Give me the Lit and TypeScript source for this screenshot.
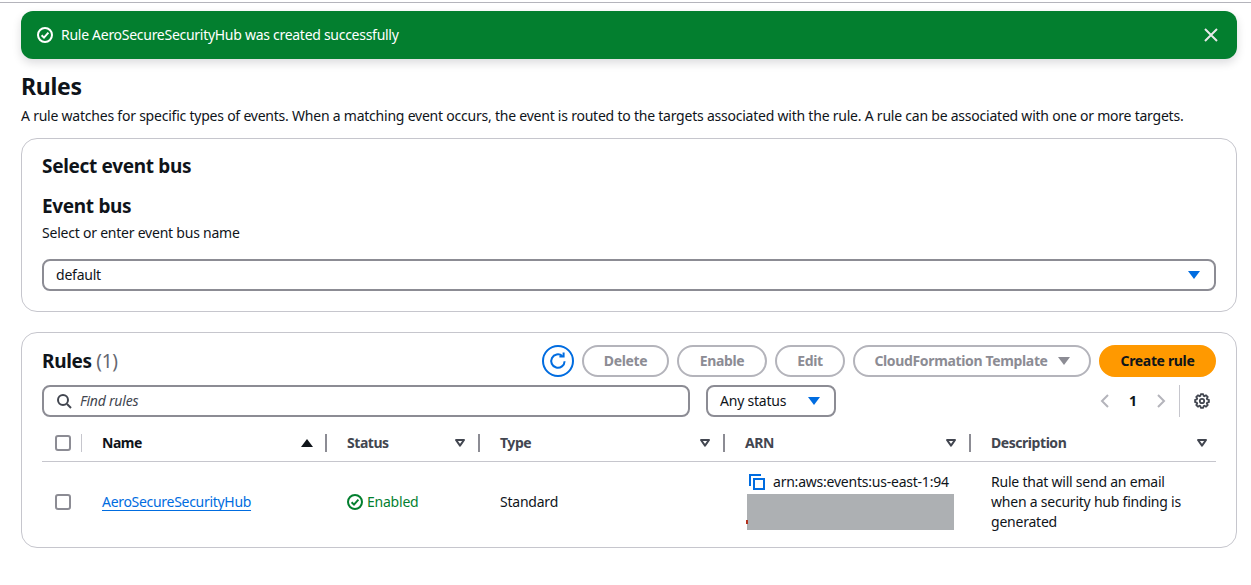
import { LitElement, html, css } from "lit";
import { customElement } from "lit/decorators.js";

const caret = (c: string) => html`<svg class="caret" width="12" height="10" viewBox="0 0 12 10"><path d="M0 1h12L6 9z" fill="${c}"/></svg>`;
const sortIcon = html`<svg class="sort" width="12" height="10" viewBox="0 0 12 10"><path d="M2 2h8L6 7.6z" fill="none" stroke="#424650" stroke-width="2" stroke-linejoin="round"/></svg>`;
const check = (c: string, w = 16) => html`<svg width="${w}" height="${w}" viewBox="0 0 16 16" fill="none" stroke="${c}" stroke-width="2"><circle cx="8" cy="8" r="7"/><path d="M4.6 8.2 7 10.6l4.4-5"/></svg>`;

// eight teeth round the settings icon
const gearPath = () => {
  const pts: string[] = [];
  for (let i = 0; i < 8; i++) {
    const a = (i * Math.PI) / 4 - Math.PI / 2;
    for (const [d, r] of [[-0.3, 5.4], [-0.17, 7], [0.17, 7], [0.3, 5.4]]) {
      pts.push(`${(8 + r * Math.cos(a + d)).toFixed(2)} ${(8 + r * Math.sin(a + d)).toFixed(2)}`);
    }
  }
  return "M" + pts.join("L") + "z";
};

@customElement("app-root")
export class AppRoot extends LitElement {
  static styles = css`
    :host {
      display: block;
      height: 585px;
      overflow: hidden;
      background: #fff;
      color: #0f141a;
      font-family: "Noto Sans", "Open Sans", sans-serif;
      font-size: 14px;
      line-height: 20px;
      letter-spacing: -0.225px;
    }
    .topline { height: 1px; margin-top: 2px; background: #b4b4bb; }
    .page { padding: 8px 14px 0 21px; }
    .flash {
      display: flex;
      align-items: center;
      height: 48px;
      padding: 0 19px 0 16px;
      gap: 8px;
      border-radius: 12px;
      background: #037f2f;
      color: #fff;
      letter-spacing: -0.28px;
      box-shadow: 0 4px 10px rgba(0, 7, 22, 0.14);
    }
    .flash span { flex: 1; }
    h1 { margin: 12px 0 0; font-size: 23px; line-height: 30px; font-weight: 700; letter-spacing: -0.3px; }
    .intro { margin: 5px 0 0; }
    .card {
      border: 1px solid #c6c6cd;
      border-radius: 16px;
      padding: 0 20px;
    }
    .bus { margin-top: 12px; height: 174px; box-sizing: border-box; padding-top: 14px; }
    h2 { margin: 0; font-size: 19px; line-height: 26px; font-weight: 700; letter-spacing: -0.33px; }
    .bus h2 + h2 { margin-top: 14px; }
    .hint { margin-top: 4px; }
    .select {
      display: flex;
      align-items: center;
      justify-content: space-between;
      box-sizing: border-box;
      height: 32px;
      margin-top: 16px;
      padding: 0 14px 0 12px;
      border: 2px solid #8c8c94;
      border-radius: 8px;
    }
    .list { margin-top: 20px; height: 216px; box-sizing: border-box; padding-top: 12px; }
    .head { display: flex; align-items: center; height: 32px; }
    .head h2 { flex: 1; }
    .head h2 em { font-style: normal; font-weight: 400; color: #656871; }
    .actions { display: flex; align-items: center; gap: 8px; }
    .refresh {
      display: flex;
      align-items: center;
      justify-content: center;
      box-sizing: border-box;
      width: 32px;
      height: 32px;
      border: 2px solid #006ce0;
      border-radius: 50%;
    }
    .btn {
      display: flex;
      align-items: center;
      justify-content: center;
      gap: 10px;
      box-sizing: border-box;
      height: 32px;
      border: 2px solid #b4b4bb;
      border-radius: 16px;
      color: #8c8c94;
      font-weight: 700;
      letter-spacing: -0.35px;
    }
    .btn.delete { width: 87px; }
    .btn.enable { width: 90px; }
    .btn.edit { width: 70px; }
    .btn.cf { width: 238px; }
    .btn.primary { width: 117px; border-color: #ff9900; background: #ff9900; color: #0f141a; }
    .filters { display: flex; align-items: center; margin-top: 8px; height: 32px; }
    .search {
      display: flex;
      align-items: center;
      gap: 8px;
      box-sizing: border-box;
      width: 648px;
      height: 32px;
      padding: 0 10px 0 12px;
      border: 2px solid #8c8c94;
      border-radius: 8px;
      color: #424650;
      font-style: italic;
    }
    .status {
      display: flex;
      align-items: center;
      justify-content: space-between;
      box-sizing: border-box;
      width: 130px;
      height: 32px;
      margin-left: 16px;
      padding: 0 14px 0 12px;
      border: 2px solid #8c8c94;
      border-radius: 8px;
    }
    .pager { display: flex; align-items: center; margin-left: auto; padding-right: 6px; }
    .pager svg { flex: none; }
    .pager b { width: 44px; text-align: center; }
    .pager .rule { width: 1px; height: 32px; margin: 0 14px 0 12px; background: #c6c6cd; }
    .table { display: grid; grid-template-columns: 40px 245px 153px 245px 246px 1fr; margin-top: 7px; }
    .th {
      display: flex;
      align-items: center;
      justify-content: space-between;
      box-sizing: border-box;
      height: 38px;
      padding: 0 0 0 20px;
      border-bottom: 1px solid #c6c6cd;
      color: #424650;
      font-weight: 700;
      letter-spacing: -0.45px;
    }
    .th .bar { width: 2px; height: 18px; margin-left: 12px; background: #8c8c94; flex: none; }
    .th.first { padding: 0; }
    .th.first .bar { width: 1px; background: #c6c6cd; margin-left: 10px; }
    .th.dark { color: #0f141a; }
    .th .sort, .th .caret { margin-left: auto; }
    .th.last { padding-right: 8px; }
    .td {
      display: flex;
      align-items: center;
      box-sizing: border-box;
      height: 80px;
      padding-left: 20px;
    }
    .td.check { padding: 0; }
    .box { box-sizing: border-box; width: 16px; height: 16px; border: 2px solid #8c8c94; border-radius: 3px; margin-left: 13px; flex: none; }
    a { color: #006ce0; letter-spacing: -0.3px; text-decoration: underline; text-underline-offset: 3px; }
    .on { display: flex; align-items: center; gap: 4px; color: #037f2f; }
    .arn { display: block; padding: 10px 0 0 20px; }
    .arn div.line { display: flex; align-items: center; gap: 8px; margin-left: 4px; }
    .mask { position: relative; width: 207px; height: 36px; margin: 2px 0 0 2px; background: #adb0b3; }
    .mask::before { content: ""; position: absolute; left: -1px; top: 26px; width: 2px; height: 4px; background: #b3321f; }
    .desc { padding-right: 20px; }
  `;

  render() {
    return html`
      <div class="topline"></div>
      <div class="page">
        <div class="flash">
          ${check("#fff")}
          <span>Rule AeroSecureSecurityHub was created successfully</span>
          <svg width="14" height="14" viewBox="0 0 14 14" stroke="#e8e8ea" stroke-width="2"><path d="M1 1l12 12M13 1 1 13"/></svg>
        </div>
        <h1>Rules</h1>
        <p class="intro">A rule watches for specific types of events. When a matching event occurs, the event is routed to the targets associated with the rule. A rule can be associated with one or more targets.</p>
        <section class="card bus">
          <h2>Select event bus</h2>
          <h2>Event bus</h2>
          <div class="hint">Select or enter event bus name</div>
          <div class="select"><span>default</span>${caret("#006ce0")}</div>
        </section>
        <section class="card list">
          <div class="head">
            <h2>Rules <em>(1)</em></h2>
            <div class="actions">
              <div class="refresh">
                <svg width="20" height="20" viewBox="0 0 20 20" fill="none" stroke="#006ce0" stroke-width="2"><path d="M16.6 10.2a6.7 6.7 0 1 1-2.3-5.2"/><path d="M15.6 1.4v4.2h-4.2"/></svg>
              </div>
              <div class="btn delete">Delete</div>
              <div class="btn enable">Enable</div>
              <div class="btn edit">Edit</div>
              <div class="btn cf">CloudFormation Template ${caret("#8c8c94")}</div>
              <div class="btn primary">Create rule</div>
            </div>
          </div>
          <div class="filters">
            <div class="search">
              <svg width="16" height="16" viewBox="0 0 16 16" fill="none" stroke="#424650" stroke-width="2"><circle cx="7" cy="7" r="5"/><path d="M11 11l4 4"/></svg>
              Find rules
            </div>
            <div class="status"><span>Any status</span>${caret("#006ce0")}</div>
            <div class="pager">
              <svg width="12" height="14" viewBox="0 0 12 14" fill="none" stroke="#b4b4bb" stroke-width="2"><path d="M9 1 3 7l6 6"/></svg>
              <b>1</b>
              <svg width="12" height="14" viewBox="0 0 12 14" fill="none" stroke="#b4b4bb" stroke-width="2"><path d="m3 1 6 6-6 6"/></svg>
              <div class="rule"></div>
              <svg width="16" height="16" viewBox="0 0 16 16" fill="none" stroke="#424650" stroke-width="1.8" stroke-linejoin="round"><circle cx="8" cy="8" r="2.2"/><path d="${gearPath()}"/></svg>
            </div>
          </div>
          <div class="table">
            <div class="th first"><div class="box"></div><div class="bar"></div></div>
            <div class="th dark">Name<svg class="sort" width="12" height="10" viewBox="0 0 12 10"><path d="M6 1l6 8H0z" fill="#0f141a"/></svg><div class="bar"></div></div>
            <div class="th">Status${sortIcon}<div class="bar"></div></div>
            <div class="th">Type${sortIcon}<div class="bar"></div></div>
            <div class="th">ARN${sortIcon}<div class="bar"></div></div>
            <div class="th last">Description${sortIcon}</div>

            <div class="td check"><div class="box"></div></div>
            <div class="td"><a href="#">AeroSecureSecurityHub</a></div>
            <div class="td"><span class="on">${check("#037f2f")}Enabled</span></div>
            <div class="td">Standard</div>
            <div class="td arn">
              <div class="line">
                <svg width="16" height="16" viewBox="0 0 16 16" fill="none" stroke="#006ce0" stroke-width="2"><path d="M1 12V1h11"/><path d="M5 5h10v10H5z"/></svg>
                <span>arn:aws:events:us-east-1:94</span>
              </div>
              <div class="mask"></div>
            </div>
            <div class="td desc">Rule that will send an email when a security hub finding is generated</div>
          </div>
        </section>
      </div>
    `;
  }
}
